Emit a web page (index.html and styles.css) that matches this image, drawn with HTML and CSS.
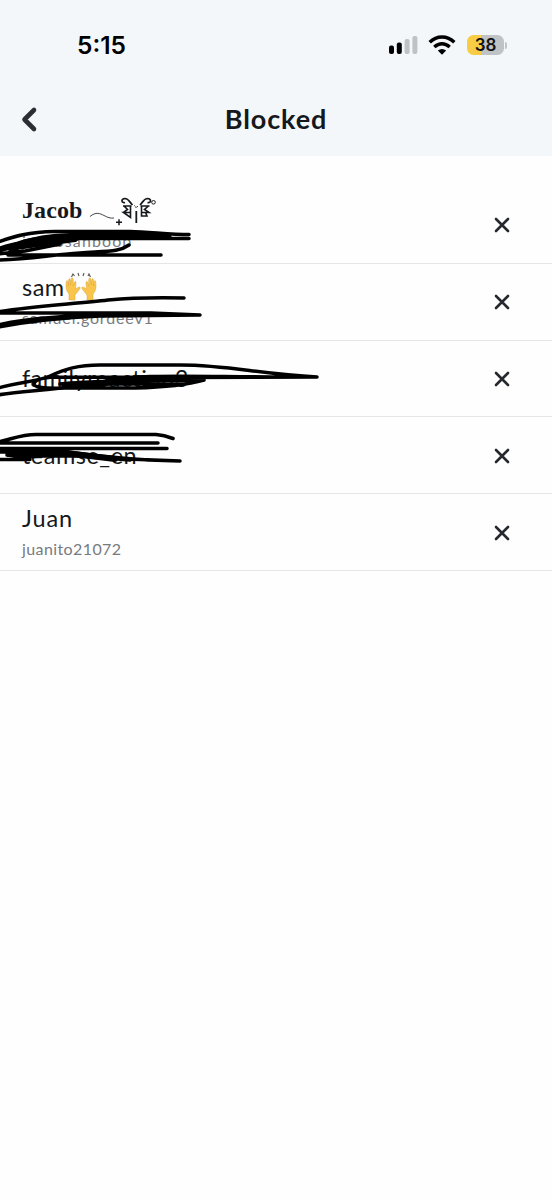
FILE: index.html
```html
<!DOCTYPE html>
<html lang="en">
<head>
<meta charset="utf-8">
<title>Blocked</title>
<link rel="stylesheet" href="styles.css">
</head>
<body>
<header class="top">
  <div class="status">
    <time class="clock">5:15</time>
    <div class="indicators">
      <svg class="signal" width="29" height="20" viewBox="0 0 29 20"><rect x="0" y="10.5" width="5" height="8.500" rx="2"/><rect x="7.800" y="7.500" width="5" height="11.500" rx="2"/><g fill="#bfc2c4"><rect x="15.600" y="4" width="5" height="15" rx="2"/><rect x="23.400" y="1" width="5" height="18" rx="2"/></g></svg>
      <svg class="wifi" width="28" height="22" viewBox="0 0 28 22"><g fill="none" stroke="#000" stroke-width="3.500"><path d="M1.700 8.200Q7 3 14 3T26.300 8.200"/><path d="M6.300 13Q10 9.700 14 9.700T21.700 13"/></g><path d="M9.800 16.600Q14 13.400 18.200 16.600L14 20.800Z"/></svg>
      <div class="battery"><span class="level">38</span><i class="cap"></i></div>
    </div>
  </div>
  <div class="nav">
    <svg class="back" width="18" height="28" viewBox="0 0 18 28"><path d="M14 5L4.500 14.500L14 24" fill="none" stroke="#2b2f35" stroke-width="4.600" stroke-linecap="round" stroke-linejoin="round"/></svg>
    <h1 class="title">Blocked</h1>
  </div>
</header>
<main class="list">
  <section class="row">
    <div class="who">
      <div class="name"><span class="serif">Jacob</span>
        <svg class="flourish" width="70" height="34" viewBox="88 196 70 34" fill="none" stroke="#15181c">
          <path d="M90 217.500C96 212.500 100 214.500 104 216.500S110 219.500 114 219" stroke-width=".8"/>
          <path d="M116 223.300H122M119 220.300V226.300" stroke-width="1.500"/>
          <path d="M125 203.500C121.500 204.500 120.500 199.800 125 199.500C128.500 199.500 129.500 203 132.500 206M147.500 203.500C151 204.500 152 199.800 147.500 199.500C144 199.500 143 203 140 206" stroke-width="1.700"/>
          <path d="M123 207H131.500M130.500 207V218.500L123.500 213.500H130M124 207L127.500 210.500L123.500 213.500M149.500 207H140.500M141.500 207V217H147L145.500 213.500M148.500 207L144.500 210.500L149 213.500H142" stroke-width="1.600"/>
          <path d="M136.300 212V224" stroke-width="1.800"/><path d="M134.500 206.500L136.300 209L138 206.500" stroke-width="1" stroke-dasharray="1.300 .8"/>
          <circle cx="153.500" cy="203.300" r="1.800" stroke-width="1"/>
        </svg>
      </div>
      <div class="handle h1">jacobsanboob</div>
    </div>
    <svg class="close" viewBox="0 0 16 16"><path d="M2 2L14 14M14 2L2 14"/></svg>
    <svg class="ink" viewBox="0 187 340 77"><path d="M-2 242C15 236 28 232 55 231.500H130C150 232 170 234.500 189 234.500M189 238.500H60C30 240 10 244 -2 249M14 245C30 236 70 235 110 235.500L170 237M14 247C35 238 70 240 90 237M-2 251C20 245 42 243 66 241M8 253C20 243 55 238 75 240M8 255H161M-2 260C30 259 50 255 80 253S119 252 129 245M15 246L25 243L8 254M-2 254L25 251L60 244"/><path class="thick" d="M14 246Q45 235 75 236L160 235M16 247L60 241L75 239"/></svg>
  </section>
  <section class="row">
    <div class="who">
      <div class="name">sam<svg class="hands" width="32" height="30" viewBox="65 273 32 30"><g fill="#f9c64b" stroke="#dda236" stroke-width=".5"><path id="hand" d="M69 301V295Q65 291 66.300 283Q67 280 68 283L68.500 287V281Q69.500 278 70.500 281V286L71.300 280Q72.500 277 73.300 281V287L74.500 283Q76 281 76 284L75.500 290L78 288.500Q81 287 79.800 290L75 296V301Z"/><use href="#hand" transform="translate(162 0) scale(-1 1)"/></g><path d="M71.500 278L73 275L74.500 277M78 274L79 277M84 274L83 277M88 277L89 275L90.500 278" fill="none" stroke="#59544b" stroke-width="1.100"/></svg></div>
      <div class="handle h2">samuel.gordeev1</div>
    </div>
    <svg class="close" viewBox="0 0 16 16"><path d="M2 2L14 14M14 2L2 14"/></svg>
    <svg class="ink" viewBox="0 264 340 77"><path d="M-2 312C30 306 75 304 108 300Q140 297 184 298M-2 313L75 313H151L200 315M-2 327C25 322 55 318 100 316L200 315M-2 325C30 317 70 316 150 313"/></svg>
  </section>
  <section class="row">
    <div class="who single"><div class="name n3">familyreaction3</div></div>
    <svg class="close" viewBox="0 0 16 16"><path d="M2 2L14 14M14 2L2 14"/></svg>
    <svg class="ink" viewBox="0 341 340 77"><path d="M-2 388C20 382 35 382 50 376C65 369 78 365 100 365H180C230 365 257 374 317 377M-2 395C25 390 55 391 100 382S180 377 317 377M34 384Q35 378 55 377L180 377.500L317 377M34 384Q34 389 65 388H135C170 387 190 384 204 380M60 384Q100 380 204 380M63 387L110 384L185 384"/></svg>
  </section>
  <section class="row">
    <div class="who single"><div class="name n4">teamse_en</div></div>
    <svg class="close" viewBox="0 0 16 16"><path d="M2 2L14 14M14 2L2 14"/></svg>
    <svg class="ink" viewBox="0 418 340 77"><path d="M-2 443C15 439 22 435.500 36 435.500H156Q164 436 173 439.500M-2 444H158M-2 449.500H167M-2 460.500H30M7 454C20 450 45 451 60 452C100 457 130 461 180 462M7 456Q30 460 60 454L100 459L180 462M-2 453L50 453M20 457H80L130 461"/><path class="thick" d="M9 455L65 454L115 460"/></svg>
  </section>
  <section class="row">
    <div class="who"><div class="name n5">Juan</div><div class="handle h5">juanito21072</div></div>
    <svg class="close" viewBox="0 0 16 16"><path d="M2 2L14 14M14 2L2 14"/></svg>
  </section>
</main>
</body>
</html>
```
FILE: styles.css
```css
* { box-sizing: border-box; }
body { margin: 0; min-height: 1200px; background: #fefefe; color: #15181c; font-family: Lato, sans-serif; }
.top { height: 156px; background: #f3f7f9; }
.status { height: 82px; padding: 8px 48px 0 77px; display: flex; align-items: center; justify-content: space-between; }
.clock { font: 600 24.5px Inter, sans-serif; color: #000; letter-spacing: 0; }
.indicators { display: flex; align-items: center; }
.wifi { margin: 0 11px 0 10px; }
.battery { position: relative; width: 37px; height: 20px; border-radius: 6.5px; background: linear-gradient(90deg, #f8cd46 38%, #c0c3c5 38%); text-align: center; }
.level { display: block; font: 600 17px/20px Inter, sans-serif; color: #111; }
.cap { position: absolute; left: 38px; top: 7px; width: 2px; height: 7px; border-radius: 0 3px 3px 0; background: #c0c3c5; }
.nav { height: 74px; display: grid; grid-template-columns: 60px 1fr 60px; align-items: center; }
.back { margin-left: 20px; }
.title { margin: 0; text-align: center; font-size: 27px; line-height: 34px; font-weight: 700; letter-spacing: .9px; }
.list { padding-top: 31px; }
.row { position: relative; height: 76.8px; border-bottom: 1px solid #e5e6e8; padding: 0 42px 0 22px; display: flex; align-items: center; justify-content: space-between; }
.who { display: flex; flex-direction: column; gap: 4px; }
.name { display: flex; align-items: center; height: 28px; font-size: 23.5px; line-height: 28px; white-space: nowrap; letter-spacing: .5px; }
.serif { font: 700 24px/28px "Liberation Serif", serif; letter-spacing: .1px; }
.flourish { margin: 3px 0 0 5px; }
.handle { font-size: 16px; line-height: 25px; height: 25px; color: #777a80; letter-spacing: .4px; }
.h1 { letter-spacing: 1.1px; }
.h2 { letter-spacing: .85px; }
.n3 { letter-spacing: .45px; }
.n5 { letter-spacing: .9px; }
.close { width: 16px; height: 16px; margin-top: 1px; fill: none; stroke: #25292e; stroke-width: 2.6; stroke-linecap: round; }
.ink { position: absolute; left: 0; top: 0; width: 340px; height: 77px; fill: none; stroke: #000; stroke-width: 3.5; stroke-linecap: round; stroke-linejoin: round; }
.thick { stroke-width: 6; }
```
